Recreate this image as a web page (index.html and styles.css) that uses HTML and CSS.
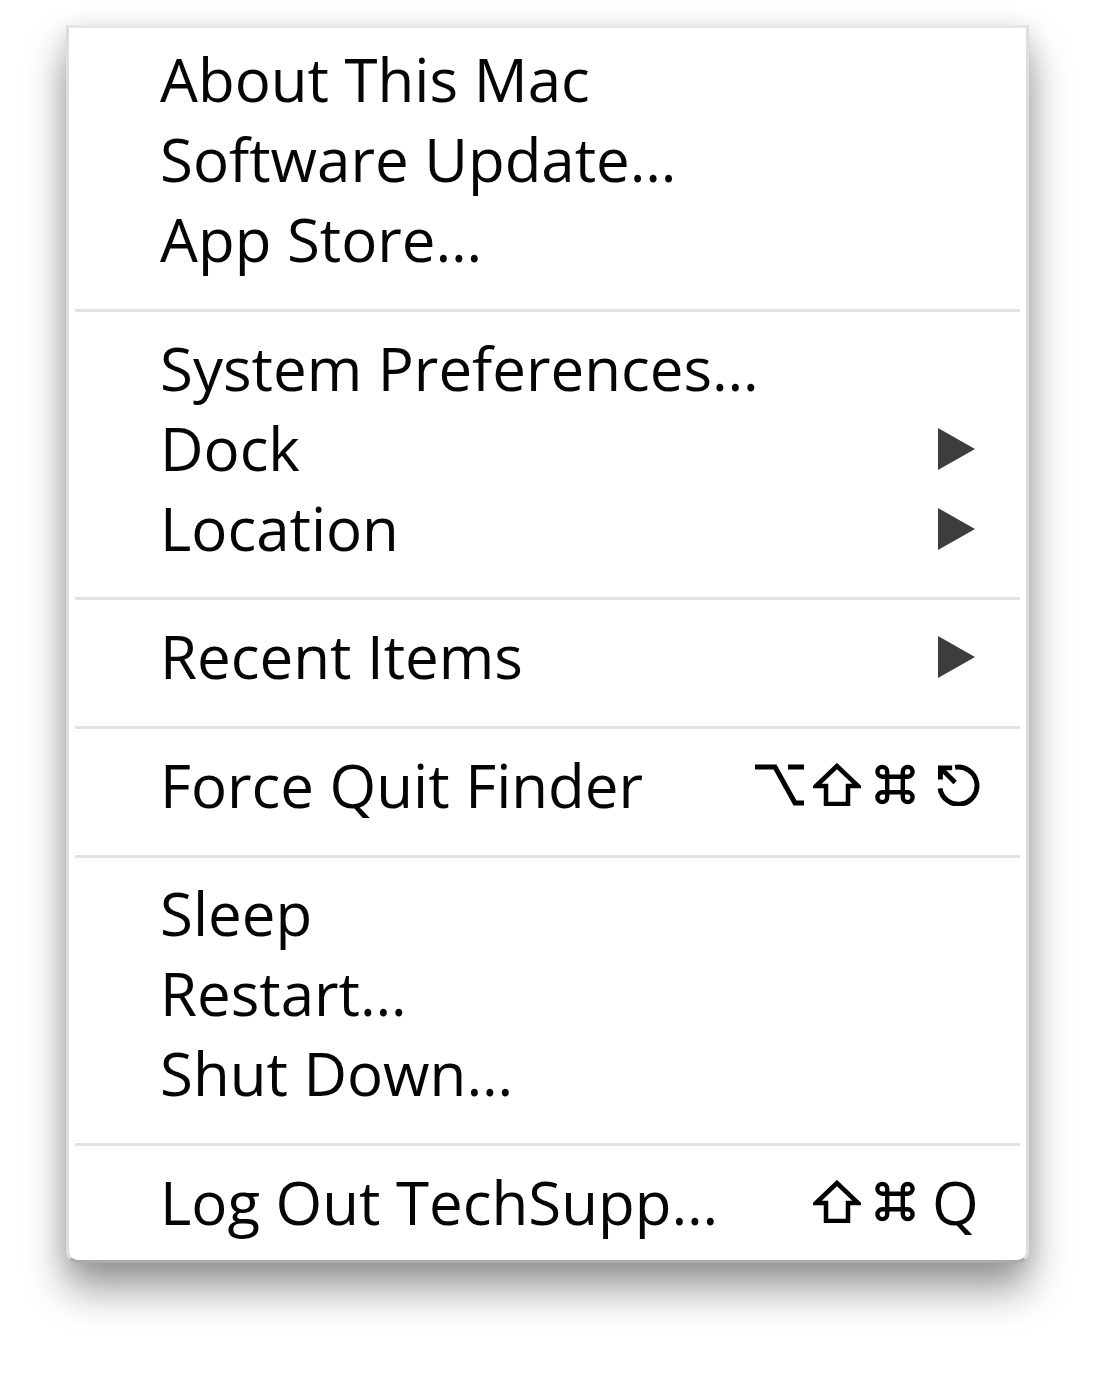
FILE: index.html
```html
<!DOCTYPE html>
<html lang="en">
<head>
<meta charset="utf-8">
<title>Apple Menu</title>
<link rel="stylesheet" href="styles.css">
</head>
<body>
<div class="menu">
  <div class="item"><span class="label">About This Mac</span></div>
  <div class="item"><span class="label">Software Update…</span></div>
  <div class="item"><span class="label">App Store…</span></div>
  <div class="sep"><div class="line"></div></div>
  <div class="item"><span class="label">System Preferences…</span></div>
  <div class="item"><span class="label">Dock</span><svg class="arrow" width="37" height="42" viewBox="0 0 37 42"><polygon points="0,0 37,21 0,42" fill="#3d3d3d"/></svg></div>
  <div class="item"><span class="label">Location</span><svg class="arrow" width="37" height="42" viewBox="0 0 37 42"><polygon points="0,0 37,21 0,42" fill="#3d3d3d"/></svg></div>
  <div class="sep"><div class="line"></div></div>
  <div class="item"><span class="label">Recent Items</span><svg class="arrow" width="37" height="42" viewBox="0 0 37 42"><polygon points="0,0 37,21 0,42" fill="#3d3d3d"/></svg></div>
  <div class="sep"><div class="line"></div></div>
  <div class="item">
    <span class="label">Force Quit Finder</span>
    <span class="keys">
      <span class="key"><svg width="50" height="43" viewBox="0 0 50 43"><path d="M1 4 H21 L41 40 H50 M34 4 H50" fill="none" stroke="#000" stroke-width="5"/></svg></span>
      <span class="key"><svg width="48" height="43" viewBox="0 0 48 43"><path d="M24 3 L3 23 H13 V41 H35 V23 H45 Z" fill="none" stroke="#000" stroke-width="4.5" stroke-linejoin="miter"/></svg></span>
      <span class="key"><svg width="44" height="43" viewBox="0 0 44 44"><path d="M14 35 V9 a5 5 0 1 0 -5 5 H35 a5 5 0 1 0 -5 -5 V35 a5 5 0 1 0 5 -5 H9 a5 5 0 1 0 5 5 Z" fill="none" stroke="#000" stroke-width="4.5"/></svg></span>
      <span class="key key-esc"><svg width="48" height="43" viewBox="0 0 48 44"><path d="M20 4.5 A19 19 0 1 1 4.6 26" fill="none" stroke="#000" stroke-width="5"/><path d="M5 17 V5 H17 M5 5 L20 20" fill="none" stroke="#000" stroke-width="5"/></svg></span>
    </span>
  </div>
  <div class="sep"><div class="line"></div></div>
  <div class="item"><span class="label">Sleep</span></div>
  <div class="item"><span class="label">Restart…</span></div>
  <div class="item"><span class="label">Shut Down…</span></div>
  <div class="sep"><div class="line"></div></div>
  <div class="item">
    <span class="label">Log Out TechSupp…</span>
    <span class="keys">
      <span class="key"><svg width="48" height="43" viewBox="0 0 48 43"><path d="M24 3 L3 23 H13 V41 H35 V23 H45 Z" fill="none" stroke="#000" stroke-width="4.5" stroke-linejoin="miter"/></svg></span>
      <span class="key"><svg width="44" height="43" viewBox="0 0 44 44"><path d="M14 35 V9 a5 5 0 1 0 -5 5 H35 a5 5 0 1 0 -5 -5 V35 a5 5 0 1 0 5 -5 H9 a5 5 0 1 0 5 5 Z" fill="none" stroke="#000" stroke-width="4.5"/></svg></span>
      <span class="key key-text">Q</span>
    </span>
  </div>
</div>
</body>
</html>
```

FILE: styles.css
```css
html, body {
  margin: 0;
  padding: 0;
  background: #ffffff;
}

body {
  width: 1097px;
  height: 1376px;
  overflow: hidden;
  font-family: "Open Sans", "DejaVu Sans", sans-serif;
}

.menu {
  box-sizing: border-box;
  width: 963px;
  margin: 25px 0 0 66px;
  padding: 18px 0 11px 0;
  background: #ffffff;
  border: 3px solid #dedede;
  border-top-color: #e6e6e6;
  border-bottom-color: #ababab;
  border-radius: 0 0 12px 12px;
  box-shadow: 0 26px 42px rgba(0, 0, 0, 0.40), 0 4px 24px rgba(0, 0, 0, 0.10);
}

.item {
  box-sizing: border-box;
  height: 80px;
  display: flex;
  align-items: flex-start;
  padding: 0 44px 0 91px;
}

.label {
  flex: 1;
  font-size: 60px;
  font-weight: 500;
  line-height: 67px;
  color: #050505;
  white-space: nowrap;
}

.arrow {
  display: block;
  margin-top: 13px;
  margin-right: 7px;
}

.keys {
  display: flex;
  align-items: flex-start;
}

.key {
  width: 58px;
  display: flex;
  justify-content: center;
  margin-top: 11px;
}

.key svg {
  display: block;
}

.key-esc {
  margin-left: 6px;
  margin-right: -6px;
}

.key-text {
  margin-top: 0;
  font-size: 60px;
  font-weight: 500;
  line-height: 67px;
  color: #050505;
  justify-content: flex-start;
  padding-left: 8px;
  box-sizing: border-box;
}

.sep {
  height: 48.6px;
  display: flex;
  align-items: center;
  padding: 0 6px;
}

.line {
  flex: 1;
  height: 3px;
  background: #e2e2e2;
}
```
